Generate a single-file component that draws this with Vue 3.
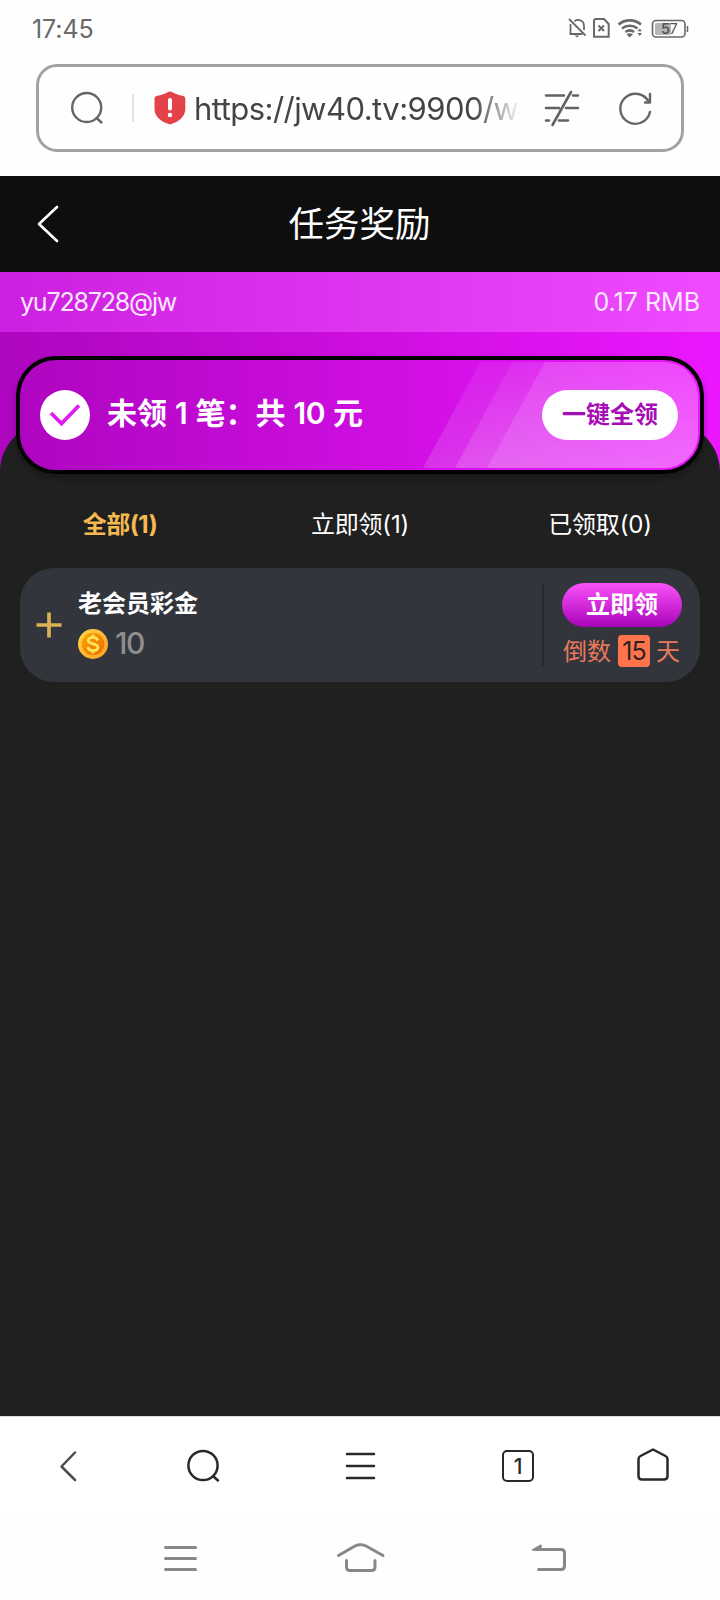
<script setup>
const tabs = [
  { label: '全部', count: 1, active: true },
  { label: '立即领', count: 1, active: false },
  { label: '已领取', count: 0, active: false },
]
</script>

<template>
  <div class="screen">
    <header class="status">
      <span class="clock">17:45</span>
      <svg class="status-icons" width="124" height="24" viewBox="0 0 124 24" fill="none" stroke="#686868" stroke-width="2">
        <path d="M4.500 8V18H16.500M8.500 5.200C12.500 2.500 18 4.500 18 10V14M4.500 18V11" stroke-width="1.800" />
        <path d="M3 3L19.500 19.500" stroke-width="1.800" />
        <path d="M8.500 19.500h5l-2.500 2z" fill="#686868" stroke="none" />
        <path d="M30 3H38L42.700 8V20.700H28V5Q28 3 30 3Z" />
        <path d="M32.500 9.500L38 15M38 9.500L32.500 15" />
        <path d="M52.500 8.500C59 3 68.500 3 75 8.500M56 12.500C60.500 8.800 67 8.800 71.500 12.500M59.500 16C62 14 65.500 14 68 16" stroke-width="2.600" />
        <path d="M60.500 18.200Q63.700 16.500 67 18.200L63.700 21.500Z" fill="#686868" stroke="none" />
        <path d="M71.500 15.200L73.800 12.500L76 15.200ZM71.500 17L73.800 20L76 17Z" fill="#686868" stroke="none" />
        <rect x="86.500" y="4.500" width="32.500" height="16.500" rx="3.500" stroke-width="1.600" />
        <rect x="89" y="7" width="16" height="12" rx="1.500" fill="#b5b5b5" stroke="none" />
        <path d="M121.500 10V16" stroke-width="1.500" />
        <text x="95" y="18.300" class="battery" stroke="none" fill="#555">5</text>
        <text x="103.500" y="18.300" class="battery light" stroke="none" fill="#555">7</text>
      </svg>
    </header>

    <div class="address">
      <svg class="a-search" width="36" height="36" viewBox="0 0 36 36" fill="none" stroke="#656565" stroke-width="2.400" stroke-linecap="round">
        <circle cx="17.700" cy="17.500" r="14.500" /><path d="M27.500 28L32.500 32.500" />
      </svg>
      <i class="bar"></i>
      <svg class="shield" width="32" height="34" viewBox="0 0 32 34">
        <path d="M14.500.8Q16 .1 17.500.8C21 3 25 4.200 28.500 4.800Q31.300 5.400 31.300 8V18C31.300 26 24 31 17.500 33Q16 33.500 14.500 33C8 31 .5 26 .5 18V8Q.5 5.400 3.300 4.800C7 4.200 11 3 14.500.8Z" fill="#e34249" />
        <path d="M16 9V17.500" stroke="#fff" stroke-width="4" stroke-linecap="round" />
        <circle cx="16" cy="24" r="2.200" fill="#fff" />
      </svg>
      <span class="url">https://jw40.tv:9900/we</span>
      <svg class="a-reader" width="36" height="38" viewBox="0 0 36 38" fill="none" stroke="#626262" stroke-width="2.600" stroke-linecap="round">
        <path d="M2 6.500H20M29 6.500H34M2 19H15M22 19H34M2 31.500H5M15 31.500H24M27 3L8.500 36" />
      </svg>
      <svg class="a-reload" width="36" height="36" viewBox="0 0 36 36" fill="none" stroke="#656565" stroke-width="2.400" stroke-linecap="round" stroke-linejoin="round">
        <path d="M33 22A15 15 0 1 1 32 12.500H28M33 4V12.500" />
      </svg>
    </div>

    <main class="page">
      <div class="titlebar">
        <svg class="back" width="24" height="40" viewBox="0 0 24 40" fill="none" stroke="#fff" stroke-width="2.600" stroke-linecap="round" stroke-linejoin="round"><path d="M21 3L3 20L21 37" /></svg>
        <h1>任务奖励</h1>
      </div>

      <section class="hero">
        <div class="user"><span class="name">yu728728@jw</span><span class="balance">0.17 RMB</span></div>
      </section>

      <section class="sheet">
        <div class="banner">
          <svg class="rays" width="680" height="110" viewBox="0 0 680 110">
            <defs>
              <linearGradient id="ray" x1="0" y1="0" x2="0" y2="1">
                <stop offset="0" stop-color="#fff" stop-opacity=".06" /><stop offset="1" stop-color="#fff" stop-opacity=".15" />
              </linearGradient>
              <linearGradient id="rayEnd" x1="0" y1="0" x2="0" y2="1">
                <stop offset="0" stop-color="#fff" stop-opacity=".12" /><stop offset="1" stop-color="#fff" stop-opacity=".11" />
              </linearGradient>
            </defs>
            <path d="M460.500 2H644A34 34 0 0 1 678 36V74A34 34 0 0 1 644 108H403Z" fill="url(#ray)" />
            <path d="M492.500 2H644A34 34 0 0 1 678 36V74A34 34 0 0 1 644 108H435Z" fill="url(#ray)" />
            <path d="M525 2H644A34 34 0 0 1 678 36V74A34 34 0 0 1 644 108H467Z" fill="url(#rayEnd)" />
          </svg>
          <svg class="check" width="50" height="50" viewBox="0 0 50 50"><circle cx="25" cy="25" r="25" fill="#fff" /><path d="M11 23L21.500 33.500L39 15.500" fill="none" stroke="#e01cf0" stroke-width="3.800" /></svg>
          <strong class="summary">未领 <b>1</b> 笔：共 <b>10</b> 元</strong>
          <button class="claim-all">一键全领</button>
        </div>

        <nav class="tabs">
          <span v-for="t in tabs" :key="t.label" :class="{ active: t.active }">{{ t.label }}({{ t.count }})</span>
        </nav>

        <article class="card">
          <svg class="plus" width="26" height="26" viewBox="0 0 26 26" stroke="#dcb053" stroke-width="3.700"><path d="M.5 13H25.500M13 .5V25.500" /></svg>
          <div class="info">
            <h2>老会员彩金</h2>
            <div class="amount">
              <svg width="30" height="30" viewBox="0 0 30 30">
                <defs>
                  <linearGradient id="rim" x1="0" y1="0" x2="1" y2="1"><stop offset="0" stop-color="#ffd84d" /><stop offset="1" stop-color="#ff9f22" /></linearGradient>
                  <linearGradient id="face" x1="0" y1="0" x2="1" y2="1"><stop offset="0" stop-color="#ffa800" /><stop offset="1" stop-color="#e96a00" /></linearGradient>
                </defs>
                <circle cx="15" cy="15" r="15" fill="url(#rim)" /><circle cx="15" cy="15" r="11.300" fill="url(#face)" />
                <path d="M19.700 11.500C19 9 17 8.300 15 8.300C12.500 8.300 10.300 9.500 10.300 11.600C10.300 16 19.900 13.500 19.900 18.300C19.900 20.500 17.600 21.600 15.100 21.600C12.500 21.600 10.500 20.500 9.800 18M15 5.500V9M15 21V24.500" fill="none" stroke="#ffe45e" stroke-width="2.800" />
              </svg>
              <span>10</span>
            </div>
          </div>
          <div class="action">
            <button>立即领</button>
            <p><span>倒数</span><em>15</em><span>天</span></p>
          </div>
        </article>
      </section>
    </main>

    <nav class="browser-nav">
      <svg width="40" height="40" viewBox="0 0 40 40" stroke="#4c4c4c"><path d="M27 6.500L13.500 20.500L27 34" /></svg>
      <svg width="40" height="40" viewBox="0 0 40 40"><circle cx="19" cy="19.500" r="14.600" /><path d="M29.500 30.500L34 34.500" /></svg>
      <svg width="40" height="40" viewBox="0 0 40 40"><path d="M7 8H34M7 20H34M7 32H34" /></svg>
      <span class="count">1</span>
      <svg width="40" height="40" viewBox="0 0 40 40"><path d="M19 3.500L31.500 10Q33.500 11 33.500 13V30Q33.500 33.500 30 33.500H8Q4.500 33.500 4.500 30V13Q4.500 11 6.500 10Z" /></svg>
    </nav>
    <nav class="system-nav">
      <svg width="50" height="34" viewBox="0 0 50 34"><path d="M9.500 5.500H39.500M9.500 16.500H39.500M9.500 27.500H39.500" /></svg>
      <svg width="50" height="34" viewBox="0 0 50 34"><path d="M2.500 13.500L19 4Q21 2.700 23.500 2.700H25.500Q28 2.700 30 4L47 13.500M10.500 18.500V25Q10.500 28.500 14 28.500H35.500Q39 28.500 39 25V18.500" /></svg>
      <svg width="50" height="34" viewBox="0 0 50 34"><path d="M12 7.500H37Q40.500 7.500 40.500 11V24Q40.500 27.500 37 27.500H14.500" /><path d="M8.500 8L17 3.200V8Z" fill="#888" stroke-width="1.500" /></svg>
    </nav>
  </div>
</template>

<style>
body { margin: 0; background: #fff; }
</style>

<style scoped>
* { box-sizing: border-box; }
h1, h2, p { margin: 0; font-weight: 400; }
em { font-style: normal; }
button { border: 0; padding: 0; font: inherit; white-space: nowrap; }
svg { flex: none; display: block; }
.screen { width: 720px; height: 1600px; display: flex; flex-direction: column; overflow: hidden; background: #fefefe; font-family: Inter, "Noto Sans CJK SC", sans-serif; }
.status { height: 64px; display: flex; justify-content: space-between; align-items: flex-start; padding: 16px 30px 0 32px; color: #696969; }
.clock { font-size: 25px; line-height: 26px; letter-spacing: -.1px; }
.battery { font: 600 14.500px Inter, sans-serif; }
.battery.light { font-weight: 400; }
.address { width: 648px; height: 88px; margin: 0 36px 24px; border: 3px solid #a2a2a2; border-radius: 21px; display: flex; align-items: center; flex: none; }
.a-search { margin-left: 30px; margin-top: -1px; }
.bar { width: 2px; height: 28px; background: #e3e3e3; margin-left: 27px; }
.shield { margin-left: 20px; }
.url { width: 331px; margin-left: 8px; margin-top: 2px; font-size: 31px; line-height: 40px; letter-spacing: -.54px; color: #444; white-space: nowrap; -webkit-mask-image: linear-gradient(90deg, #000 280px, transparent 327px); mask-image: linear-gradient(90deg, #000 280px, transparent 327px); }
.a-reader { margin-left: 19px; }
.a-reload { margin-left: 37px; }
.page { height: 1240px; flex: none; background: #202020; }
.titlebar { height: 96px; background: #0e0e0e; display: grid; grid-template-columns: 120px 1fr 120px; align-items: center; color: #fff; }
.back { margin-left: 36px; }
h1 { font-size: 35.500px; line-height: 54px; text-align: center; padding: 1px 1px 0 0; }
.hero { height: 202px; background: linear-gradient(90deg, #ae06bf, #cc0edf 50%, #ec17ff); }
.user { height: 60px; padding: 0 20px; display: flex; align-items: center; justify-content: space-between; color: #fbe8fd; font-size: 25px; background: linear-gradient(90deg, #cd1fe0, #ef4bff); }
.name { letter-spacing: -1.2px; }
.balance { letter-spacing: 0; }
.sheet { position: relative; margin-top: -52px; height: 994px; background: #202020; border-radius: 50px 50px 0 0; display: flow-root; }
.banner { position: relative; margin: -66px 16px 0; height: 118px; border: 4px solid #000; border-radius: 40px; background: linear-gradient(90deg, #af05c0, #cc0edf 50%, #eb16fe); box-shadow: 0 4px 6px rgba(0, 0, 0, .3); display: flex; align-items: center; padding: 0 22px 0 20px; }
.rays { position: absolute; left: 0; top: 0; }
.summary { position: relative; margin: -4px 0 0 17px; font-size: 30px; line-height: 44px; color: #fff; white-space: nowrap; word-spacing: 1px; }
.check, .claim-all { position: relative; }
.summary b { font-weight: 600; letter-spacing: -.5px; }
.claim-all { margin-left: auto; width: 136px; height: 50px; padding-bottom: 5px; border-radius: 25px; background: #fff; color: #a60cb7; font-size: 24px; font-weight: 700; }
.tabs { display: grid; grid-template-columns: repeat(3, 1fr); height: 94px; align-items: center; text-align: center; color: #fff; font-size: 24px; padding-top: 2px; letter-spacing: -.2px; }
.tabs .active { color: #f4ba4f; font-weight: 700; letter-spacing: -.5px; }
.card { height: 114px; margin: 0 20px; border-radius: 34px; background: #33353d; display: flex; align-items: center; }
.plus { margin-left: 16px; }
.info { margin-left: 16px; flex: 1; }
h2 { color: #fff; font-size: 24px; font-weight: 700; line-height: 34px; }
.amount { display: flex; align-items: center; height: 40px; margin-top: 3px; color: #8e8e8e; font-size: 30px; font-weight: 500; letter-spacing: -1.500px; }
.amount span { margin: -2px 0 0 7px; }
.action { width: 158px; height: 82px; border-left: 2px solid #292a31; padding-left: 18px; }
.action button { display: block; width: 120px; height: 44px; border-radius: 22px; color: #fff; font-size: 24px; font-weight: 700; line-height: 42px; background: linear-gradient(#fb52fa, #a803b9); margin-top: -1px; }
.action p { display: flex; align-items: center; margin-top: 8px; height: 32px; width: 120px; padding-left: 1px; color: #e9795b; font-size: 24px; white-space: nowrap; }
.action p span { margin-top: -4px; }
.action em { width: 32px; height: 32px; border-radius: 4px; background: #ff744c; color: #30211f; text-align: center; line-height: 32px; letter-spacing: -1px; margin: 0 6px 0 7px; font-size: 25px; }
.browser-nav { height: 100px; flex: none; display: grid; grid-template-columns: 136px 136px 176px 140px 132px; justify-items: center; align-items: center; background: #fff; border-top: 1px solid #ddd; padding-bottom: 2px; stroke: #292929; }
.browser-nav svg { fill: none; stroke-width: 2.500; stroke-linecap: round; stroke-linejoin: round; }
.count { width: 32px; height: 32px; border: 2.500px solid #292929; border-radius: 5px; color: #292929; font: 500 21px/29px Inter, sans-serif; text-align: center; }
.system-nav { height: 84px; padding-left: 90px; display: grid; grid-template-columns: 181px 179px 198px; justify-items: center; align-items: start; padding-top: 26px; }
.system-nav svg { fill: none; stroke: #888; stroke-width: 3; stroke-linecap: round; stroke-linejoin: round; }
</style>
